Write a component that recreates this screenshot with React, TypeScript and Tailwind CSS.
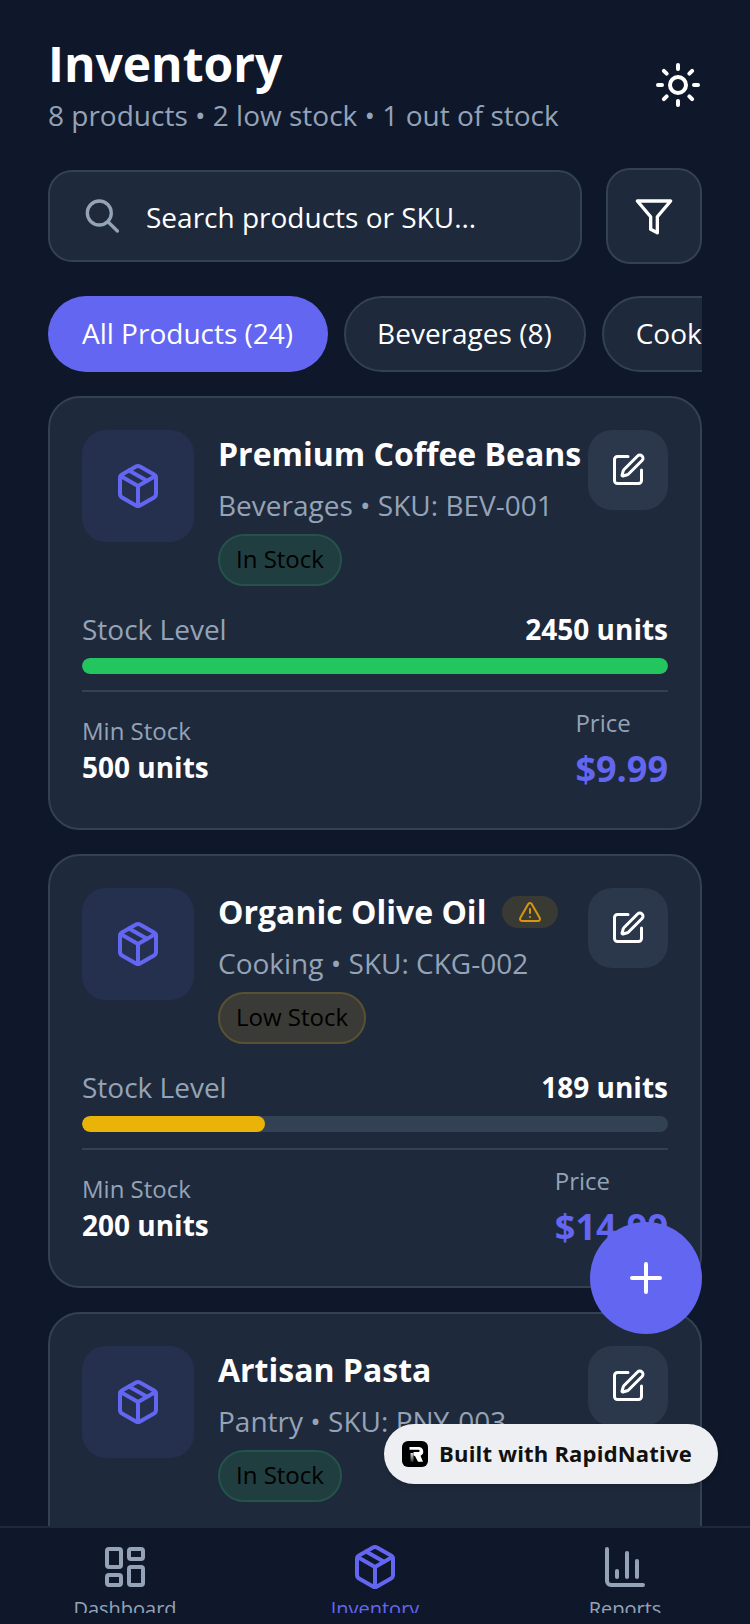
import type { ReactNode } from "react";
import { Sun, Package, SquarePen, Plus, TriangleAlert, LayoutDashboard, ChartColumn } from "lucide-react";

type P = {
  name: string;
  cat: string;
  badge: string;
  tone: "green" | "yellow";
  units: string;
  pct: string;
  min: string;
  price: string;
  warn?: boolean;
};

const items: P[] = [
  { name: "Premium Coffee Beans", cat: "Beverages • SKU: BEV-001", badge: "In Stock", tone: "green", units: "2450 units", pct: "100%", min: "500 units", price: "$9.99" },
  { name: "Organic Olive Oil", cat: "Cooking • SKU: CKG-002", badge: "Low Stock", tone: "yellow", units: "189 units", pct: "31.2%", min: "200 units", price: "$14.99", warn: true },
  { name: "Artisan Pasta", cat: "Pantry • SKU: PNY-003", badge: "In Stock", tone: "green", units: "850 units", pct: "100%", min: "300 units", price: "$6.49" },
];

function Card({ p }: { p: P }) {
  return (
    <div className="shrink-0 rounded-[32px] border-2 border-[#334155] bg-[#1e293b] p-[32px]">
      <div className="flex items-start">
        <div className="flex h-[112px] w-[112px] shrink-0 items-center justify-center rounded-[24px] bg-[#25304f]">
          <Package size={48} strokeWidth={2} className="text-[#6366f1]" />
        </div>
        <div className="ml-[24px] flex min-w-0 flex-1 flex-col items-start">
          <div className="flex h-[48px] items-center whitespace-nowrap">
            <span className="text-[32px] leading-[48px] font-bold text-white">{p.name}</span>
            {p.warn && (
              <span className="ml-[16px] flex h-[32px] w-[56px] items-center justify-center rounded-full bg-[#3a3a35]">
                <TriangleAlert size={24} strokeWidth={2} className="text-[#d69612]" />
              </span>
            )}
          </div>
          <div className="mt-[3px] text-[28px] leading-[48px] whitespace-nowrap text-[#94a3b8]">{p.cat}</div>
          <div className={`mt-[5px] rounded-full border-2 px-[16px] pt-[5px] pb-[7px] text-[24px] leading-[36px] text-black ${p.tone === "green" ? "border-[#24534a] bg-[#203d40]" : "border-[#5a5133] bg-[#3a3a36]"}`}>
            {p.badge}
          </div>
        </div>
        <div className="flex h-[80px] w-[80px] shrink-0 items-center justify-center rounded-[24px] bg-[#2b384b]">
          <SquarePen size={36} strokeWidth={2} className="text-white" />
        </div>
      </div>
      <div className="mt-[23px] flex items-center justify-between">
        <span className="text-[28px] leading-[40px] text-[#94a3b8]">Stock Level</span>
        <span className="text-[28px] leading-[40px] font-bold text-white">{p.units}</span>
      </div>
      <div className="mt-[9px] h-[16px] overflow-hidden rounded-full bg-[#334155]">
        <div className={`h-full rounded-full ${p.tone === "green" ? "bg-[#22c55e]" : "bg-[#eab308]"}`} style={{ width: p.pct }} />
      </div>
      <div className="mt-[16px] flex items-center justify-between border-t-2 border-[#334155] pt-[13px] pb-[3px]">
        <div>
          <div className="text-[24px] leading-[36px] text-[#94a3b8]">Min Stock</div>
          <div className="text-[28px] leading-[36px] font-bold text-white">{p.min}</div>
        </div>
        <div>
          <div className="text-[24px] leading-[36px] text-[#94a3b8]">Price</div>
          <div className="mt-[4px] text-[36px] leading-[48px] font-bold text-[#6366f1]">{p.price}</div>
        </div>
      </div>
    </div>
  );
}

function Nav({ label, active, children }: { label: string; active?: boolean; children: ReactNode }) {
  return (
    <div className="flex h-[85px] flex-1 flex-col items-center overflow-hidden pt-[15px]">
      {children}
      <span className={`mt-[3px] text-[20px] leading-[30px] whitespace-nowrap ${active ? "text-[#6366f1]" : "text-[#94a3b8]"}`}>{label}</span>
    </div>
  );
}

export default function App() {
  return (
    <div className="relative flex h-[1624px] w-[750px] flex-col overflow-hidden bg-[#0f172a] font-['Open_Sans','Noto_Sans',sans-serif]">
      <div className="flex min-h-0 flex-1 flex-col overflow-hidden px-[48px] pt-[32px]">
        <div className="flex items-center justify-between">
          <div>
            <h1 className="text-[48px] leading-[64px] font-bold text-white">Inventory</h1>
            <p className="pt-[1px] text-[28px] leading-[36px] text-[#94a3b8]">8 products • 2 low stock • 1 out of stock</p>
          </div>
          <Sun size={48} strokeWidth={2} className="mt-[5px] text-white" />
        </div>
        <div className="mt-[35px] flex shrink-0 items-center gap-[24px]">
          <div className="flex h-[92px] flex-1 items-center rounded-[24px] border-2 border-[#334155] bg-[#1e293b] pl-[34px]">
            <svg width="36" height="36" viewBox="0 0 36 36" fill="none" stroke="#94a3b8" strokeWidth="3.3" strokeLinecap="round">
              <circle cx="15.3" cy="15" r="12" />
              <line x1="24.2" y1="24" x2="33.4" y2="33" />
            </svg>
            <span className="ml-[26px] pt-[2px] text-[28px] text-white">Search products or SKU...</span>
          </div>
          <div className="flex h-[96px] w-[96px] items-center justify-center rounded-[24px] border-2 border-[#334155] bg-[#1e293b]">
            <svg width="40" height="40" viewBox="0 0 24 24" fill="none" stroke="#fff" strokeWidth="2" strokeLinecap="round" strokeLinejoin="round">
              <polygon points="22 3 2 3 10 12.46 10 20 14 22 14 12.46 22 3" />
            </svg>
          </div>
        </div>
        <div className="mt-[32px] flex h-[76px] shrink-0 gap-[16px] overflow-hidden">
          <div className="flex shrink-0 items-center rounded-full bg-[#6366f1] pr-[35px] pb-[2px] pl-[34px] text-[28px] text-white">All Products (24)</div>
          <div className="flex shrink-0 items-center rounded-full border-2 border-[#334155] bg-[#1e293b] pr-[32px] pb-[2px] pl-[31px] text-[28px] text-white">Beverages (8)</div>
          <div className="flex shrink-0 items-center rounded-full border-2 border-[#334155] bg-[#1e293b] px-[32px] pb-[2px] text-[28px] text-white">Cooking (6)</div>
        </div>
        <div className="mt-[24px] flex flex-col gap-[24px]">
          {items.map((p) => (
            <Card key={p.name} p={p} />
          ))}
        </div>
      </div>
      <div className="flex h-[98px] shrink-0 items-start overflow-hidden border-t-2 border-[#1e293b] bg-[#0f172a]">
        <Nav label="Dashboard"><LayoutDashboard size={48} strokeWidth={2} className="shrink-0 text-[#94a3b8]" /></Nav>
        <Nav label="Inventory" active><Package size={48} strokeWidth={2} className="shrink-0 text-[#6366f1]" /></Nav>
        <Nav label="Reports"><ChartColumn size={48} strokeWidth={2} className="shrink-0 text-[#94a3b8]" /></Nav>
      </div>
      <div className="absolute top-[1222px] left-[590px] flex h-[112px] w-[112px] items-center justify-center rounded-full bg-[#6366f1]">
        <Plus size={48} strokeWidth={2} className="text-white" />
      </div>
      <div className="absolute top-[1424px] left-[384px] flex h-[60px] w-[334px] items-center rounded-full bg-[#eeeff2] pl-[18px] shadow-md">
        <svg width="26" height="26" viewBox="0 0 26 26" className="shrink-0">
          <defs>
            <linearGradient id="rn" x1="0" y1="0" x2="0" y2="1">
              <stop offset="0" stopColor="#ddd" />
              <stop offset="1" stopColor="#333" />
            </linearGradient>
          </defs>
          <rect width="26" height="26" rx="6" fill="#000" />
          <path d="M7.5 6h9a4.6 4.6 0 0 1 2 8.8L21 20.7h-5L13 15l-1.5-.5V11h5a1.1 1.1 0 0 0 0-2.2h-9z" fill="#fff" />
          <path d="M8.5 12h3v8.7h-3z" fill="url(#rn)" />
        </svg>
        <span className="ml-[11px] pb-[2px] text-[22px] font-bold tracking-[0.2px] text-[#111]">Built with RapidNative</span>
      </div>
    </div>
  );
}
